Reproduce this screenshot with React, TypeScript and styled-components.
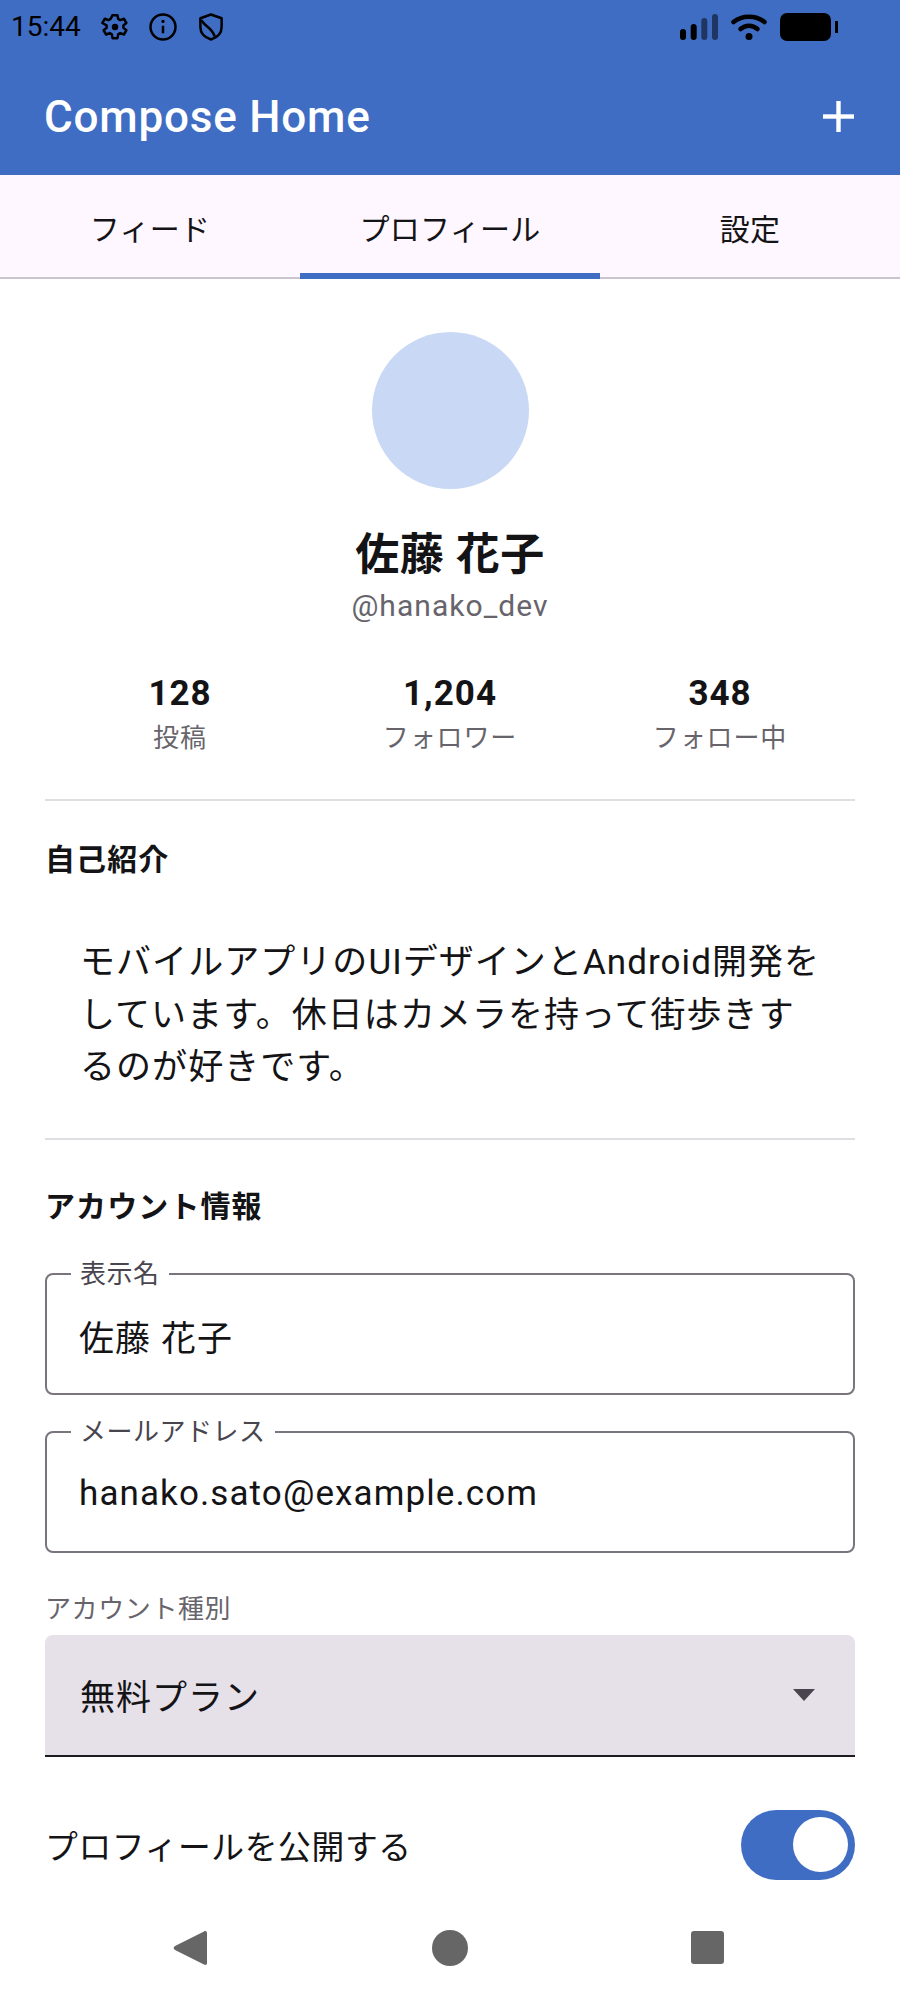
import React from "react";
import styled, { createGlobalStyle } from "styled-components";

const GlobalStyle = createGlobalStyle`
  html, body {
    margin: 0;
    padding: 0;
    background: #ffffff;
  }
  * {
    box-sizing: border-box;
  }
`;

const FONT = `Roboto, "Noto Sans CJK JP", sans-serif`;
const PRIMARY = "#3f6dc4";
const TEXT = "#141316";
const MUTED = "#67646c";

const Screen = styled.div`
  width: 900px;
  height: 2000px;
  display: flex;
  flex-direction: column;
  overflow: hidden;
  background: #ffffff;
  font-family: ${FONT};
  color: ${TEXT};
`;

const AppBar = styled.header`
  height: 175px;
  flex: none;
  background: ${PRIMARY};
  display: flex;
  flex-direction: column;
`;

const StatusBar = styled.div`
  height: 52px;
  flex: none;
  padding: 1px 62px 0 11px;
  display: flex;
  align-items: center;
  justify-content: space-between;
  color: #000000;
`;

const StatusGroup = styled.div<{ $gap: number }>`
  display: flex;
  align-items: center;
  gap: ${(p) => p.$gap}px;
`;

const Clock = styled.span`
  font-size: 28px;
  line-height: 32px;
  margin-right: 1px;
`;

const TitleRow = styled.div`
  flex: 1;
  padding: 6px 46px 0 44px;
  display: flex;
  align-items: center;
  justify-content: space-between;
`;

const Title = styled.h1`
  margin: 0;
  font-size: 44px;
  letter-spacing: 0.8px;
  font-weight: 500;
  color: #ffffff;
`;

const Tabs = styled.nav`
  height: 104px;
  flex: none;
  display: flex;
  background: #fef7ff;
  border-bottom: 2px solid #cac4d0;
`;

const Tab = styled.div<{ $active?: boolean }>`
  flex: 1;
  display: flex;
  align-items: center;
  justify-content: center;
  padding-top: 5px;
  font-size: 30px;
  letter-spacing: 0.3px;
  font-weight: 400;
  margin-bottom: -2px;
  border-bottom: 6px solid ${(p) => (p.$active ? PRIMARY : "transparent")};
`;

const Content = styled.main`
  flex: 1;
  min-height: 0;
  padding: 53px 45px 0;
  display: flex;
  flex-direction: column;
`;

const Avatar = styled.div`
  width: 157px;
  height: 157px;
  flex: none;
  align-self: center;
  border-radius: 50%;
  background: #c9d8f5;
`;

const Name = styled.div`
  margin-top: 37px;
  text-align: center;
  font-size: 44px;
  line-height: 58px;
  letter-spacing: 0.5px;
  font-weight: 700;
`;

const Handle = styled.div`
  margin-top: 2px;
  text-align: center;
  font-size: 30px;
  line-height: 40px;
  letter-spacing: 1.05px;
  color: ${MUTED};
`;

const Stats = styled.div`
  margin-top: 46px;
  display: grid;
  grid-template-columns: repeat(3, 1fr);
`;

const Stat = styled.div`
  display: flex;
  flex-direction: column;
  align-items: center;
`;

const StatValue = styled.div`
  font-size: 35px;
  line-height: 44px;
  font-weight: 700;
  letter-spacing: 1px;
`;

const StatLabel = styled.div`
  font-size: 26px;
  line-height: 36px;
  letter-spacing: 0.9px;
  margin-top: 4px;
  color: ${MUTED};
`;

const Divider = styled.hr<{ $top: number }>`
  margin: ${(p) => p.$top}px 0 0;
  border: 0;
  height: 2px;
  flex: none;
  background: #e0dee2;
`;

const SectionTitle = styled.h2<{ $top: number }>`
  margin: ${(p) => p.$top}px 0 0;
  font-size: 30px;
  line-height: 40px;
  letter-spacing: 1.1px;
  font-weight: 700;
`;

const Bio = styled.p`
  margin: 57px 0 0;
  padding: 0 28px 0 35px;
  font-size: 35px;
  line-height: 52.5px;
  letter-spacing: 1.05px;
`;

const Field = styled.div<{ $top: number }>`
  position: relative;
  margin-top: ${(p) => p.$top}px;
  height: 122px;
  flex: none;
  padding: 3px 32px 0;
  display: flex;
  align-items: center;
  border: 2px solid #79747e;
  border-radius: 8px;
  font-size: 35px;
  letter-spacing: 1.1px;
`;

const FieldLabel = styled.span`
  position: absolute;
  left: 24px;
  top: -16px;
  padding: 0 9px;
  background: #ffffff;
  font-size: 26px;
  line-height: 30px;
  letter-spacing: 0.5px;
  color: #49454f;
`;

const PlainLabel = styled.div`
  margin-top: 38px;
  font-size: 26px;
  line-height: 36px;
  letter-spacing: 0.6px;
  color: ${MUTED};
`;

const Select = styled.div`
  margin-top: 8px;
  height: 122px;
  flex: none;
  padding: 0 40px 0 35px;
  display: flex;
  align-items: center;
  justify-content: space-between;
  background: #e6e0e9;
  border-bottom: 2px solid #1d1b20;
  border-radius: 8px 8px 0 0;
  font-size: 35px;
  letter-spacing: 1px;
`;

const SwitchRow = styled.div`
  margin-top: 53px;
  display: flex;
  align-items: center;
  justify-content: space-between;
  font-size: 32.8px;
  letter-spacing: 0.6px;
`;

const SwitchTrack = styled.div`
  width: 114px;
  height: 70px;
  flex: none;
  padding: 0 7px;
  display: flex;
  align-items: center;
  justify-content: flex-end;
  border-radius: 35px;
  background: ${PRIMARY};
`;

const SwitchThumb = styled.div`
  width: 55px;
  height: 55px;
  border-radius: 50%;
  background: #ffffff;
`;

const NavButtons = styled.footer`
  height: 105px;
  flex: none;
  display: flex;
  align-items: center;
  justify-content: space-between;
  padding: 0 176px 0 172px;
`;

const GearIcon = () => (
  <svg width="30" height="30" viewBox="0 0 24 24" fill="none" stroke="#000" strokeWidth="2" strokeLinejoin="round">
    <path d="M10 2.500h4l.5 3 1.700 1 2.900-1.100 2 3.400-2.400 1.900v2l2.400 1.900-2 3.400-2.900-1.100-1.700 1-.5 3h-4l-.5-3-1.700-1-2.900 1.100-2-3.400 2.400-1.900v-2L1.900 8.800l2-3.400 2.900 1.100 1.700-1z" />
    <circle cx="12" cy="12" r="2.600" fill="#000" stroke="none" />
  </svg>
);

const InfoIcon = () => (
  <svg width="30" height="30" viewBox="0 0 24 24" fill="none" stroke="#000" strokeWidth="2">
    <circle cx="12" cy="12" r="10" />
    <path d="M12 11v6" />
    <circle cx="12" cy="7.500" r="1.300" fill="#000" stroke="none" />
  </svg>
);

const ShieldIcon = () => (
  <svg width="30" height="30" viewBox="0 0 24 24" fill="none" stroke="#000" strokeWidth="2" strokeLinejoin="round">
    <path d="M12 2l8.500 3v7c0 5-3.800 8.500-8.500 10-4.700-1.500-8.500-5-8.500-10V5z" />
    <path d="M4.500 6.500c1 4 8 5.500 10.500 13" />
  </svg>
);

const SignalIcon = () => (
  <svg width="38" height="26" viewBox="0 0 38 26">
    <rect x="0" y="15" width="6" height="11" rx="3" fill="#000" />
    <rect x="10.700" y="10" width="6" height="16" rx="3" fill="#000" />
    <rect x="21.300" y="4" width="6" height="22" rx="3" fill="#000" fillOpacity="0.5" />
    <rect x="32" y="0" width="6" height="26" rx="3" fill="#000" fillOpacity="0.5" />
  </svg>
);

const WifiIcon = () => (
  <svg width="36" height="26" viewBox="0 0 36 26" fill="none" stroke="#000" strokeWidth="4.500" strokeLinecap="round">
    <path d="M2.500 8C11 1 25 1 33.500 8" />
    <path d="M9.500 15C14.500 10.500 21.500 10.500 26.500 15" />
    <circle cx="18" cy="22.500" r="3.500" fill="#000" stroke="none" />
  </svg>
);

const BatteryIcon = () => (
  <svg width="58" height="28" viewBox="0 0 58 28">
    <rect x="0" y="0" width="51" height="28" rx="7" fill="#000" />
    <rect x="55" y="8" width="3" height="12" fill="#000" />
  </svg>
);

const PlusIcon = () => (
  <svg width="31" height="31" viewBox="0 0 31 31" fill="#fff">
    <rect x="13.300" y="0" width="4.400" height="31" />
    <rect x="0" y="13.300" width="31" height="4.400" />
  </svg>
);

const CaretIcon = () => (
  <svg width="22" height="12" viewBox="0 0 22 12">
    <path d="M0 0h22L11 12z" fill="#49454f" />
  </svg>
);

const BackIcon = () => (
  <svg width="36" height="38" viewBox="0 0 36 38">
    <path d="M32 2.500c1.500-1 3-.2 3 1.500v30c0 1.700-1.500 2.500-3 1.500L3 21c-1.800-1-1.800-3 0-4z" fill="#666666" />
  </svg>
);

const HomeIcon = () => (
  <svg width="36" height="36" viewBox="0 0 36 36">
    <circle cx="18" cy="18" r="18" fill="#666666" />
  </svg>
);

const SquareIcon = () => (
  <svg width="33" height="33" viewBox="0 0 33 33">
    <rect width="33" height="33" rx="3" fill="#666666" />
  </svg>
);

const stats = [
  { value: "128", label: "投稿" },
  { value: "1,204", label: "フォロワー" },
  { value: "348", label: "フォロー中" },
];

export default function App() {
  return (
    <Screen>
      <GlobalStyle />
      <AppBar>
        <StatusBar>
          <StatusGroup $gap={18}>
            <Clock>15:44</Clock>
            <GearIcon />
            <InfoIcon />
            <ShieldIcon />
          </StatusGroup>
          <StatusGroup $gap={13}>
            <SignalIcon />
            <WifiIcon />
            <BatteryIcon />
          </StatusGroup>
        </StatusBar>
        <TitleRow>
          <Title>Compose Home</Title>
          <PlusIcon />
        </TitleRow>
      </AppBar>

      <Tabs>
        <Tab>フィード</Tab>
        <Tab $active>プロフィール</Tab>
        <Tab>設定</Tab>
      </Tabs>

      <Content>
        <Avatar />
        <Name>佐藤 花子</Name>
        <Handle>@hanako_dev</Handle>
        <Stats>
          {stats.map((s) => (
            <Stat key={s.label}>
              <StatValue>{s.value}</StatValue>
              <StatLabel>{s.label}</StatLabel>
            </Stat>
          ))}
        </Stats>
        <Divider $top={43} />
        <SectionTitle $top={39}>自己紹介</SectionTitle>
        <Bio>
          モバイルアプリのUIデザインとAndroid開発をしています。休日はカメラを持って街歩きするのが好きです。
        </Bio>
        <Divider $top={43} />
        <SectionTitle $top={47}>アカウント情報</SectionTitle>
        <Field $top={46}>
          <FieldLabel>表示名</FieldLabel>
          佐藤 花子
        </Field>
        <Field $top={36}>
          <FieldLabel>メールアドレス</FieldLabel>
          hanako.sato@example.com
        </Field>
        <PlainLabel>アカウント種別</PlainLabel>
        <Select>
          無料プラン
          <CaretIcon />
        </Select>
        <SwitchRow>
          プロフィールを公開する
          <SwitchTrack>
            <SwitchThumb />
          </SwitchTrack>
        </SwitchRow>
      </Content>

      <NavButtons>
        <BackIcon />
        <HomeIcon />
        <SquareIcon />
      </NavButtons>
    </Screen>
  );
}
